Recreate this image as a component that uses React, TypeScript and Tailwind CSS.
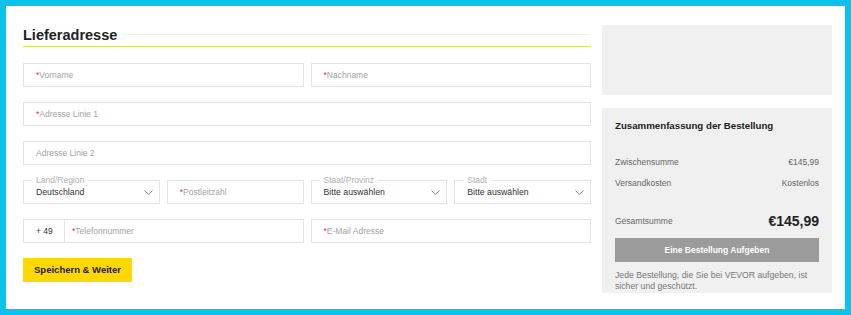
import React from 'react'

const font = { fontFamily: '"Liberation Sans", Arial, sans-serif' }

function Chevron() {
    return (
        <svg width="9" height="5" viewBox="0 0 9 5" fill="none" className="shrink-0">
            <path d="M0.5 0.5 L4.5 4.5 L8.5 0.5" stroke="#777" strokeWidth="0.9" />
        </svg>
    )
}

function TextField({ label, required = true }: { label: string; required?: boolean }) {
    return (
        <div className="h-[24px] min-w-0 border border-[#e4e4e4] bg-white flex items-center px-[12px] text-[8.5px]">
            {required && <span className="text-[#e0303a]">*</span>}
            <span className="text-[#a3a3a3]">{label}</span>
        </div>
    )
}

function SelectField({ label, value }: { label: string; value: string }) {
    return (
        <div className="relative min-w-0 h-[24px] border border-[#e4e4e4] bg-white flex items-center justify-between pl-[12px] pr-[6px]">
            <span className="absolute -top-[6px] left-[8px] px-[4px] bg-white text-[8.5px] leading-[10px] text-[#b0b0b0]">{label}</span>
            <span className="text-[8.7px] text-[#333] mt-[1px]">{value}</span>
            <Chevron />
        </div>
    )
}

export default function App() {
    return (
        <div style={font} className="w-[851px] h-[315px] border-[6px] border-[#0bc2ea] bg-white flex pt-[18px] pl-[17px] pr-[13px] box-border">
            {/* Left: address form */}
            <div className="w-[568px] flex flex-col">
                <div className="h-[22px] flex items-center gap-[6px]">
                    <h2 className="text-[14.5px] font-bold text-[#222] leading-[20px] -mt-[1px]">
                        Lieferadresse
                    </h2>
                    <div className="flex-1 h-px bg-[#f0f0f0] -mt-[1px]"></div>
                </div>
                {/* yellow-green underline */}
                <div className="h-px bg-[#d3e26a]"></div>

                <div className="mt-[16px] flex flex-col gap-[15px]">
                    <div className="grid grid-cols-2 gap-[7px]">
                        <TextField label="Vorname" />
                        <TextField label="Nachname" />
                    </div>
                    <TextField label="Adresse Linie 1" />
                    <TextField label="Adresse Linie 2" required={false} />
                    <div className="grid grid-cols-4 gap-[7px]">
                        <SelectField label="Land/Region" value="Deutschland" />
                        <TextField label="Postleitzahl" />
                        <SelectField label="Staat/Provinz" value="Bitte auswählen" />
                        <SelectField label="Stadt" value="Bitte auswählen" />
                    </div>
                    <div className="grid grid-cols-2 gap-[7px]">
                        <div className="flex min-w-0 h-[24px] border border-[#e4e4e4] text-[8.5px]">
                            <div className="w-[41px] shrink-0 border-r border-[#e4e4e4] flex items-center pl-[12px] text-[#333]">+ 49</div>
                            <div className="flex-1 flex items-center pl-[7px]">
                                <span className="text-[#e0303a]">*</span>
                                <span className="text-[#a3a3a3]">Telefonnummer</span>
                            </div>
                        </div>
                        <TextField label="E-Mail Adresse" />
                    </div>
                    <button className="w-[109px] h-[24px] bg-[#ffd800] text-[9.5px] font-bold text-[#222] flex items-center justify-center">
                        Speichern &amp; Weiter
                    </button>
                </div>
            </div>

            {/* Right: order summary */}
            <div className="ml-[11px] w-[230px] flex flex-col">
                <div className="mt-[1px] h-[70px] bg-[#f0f0f0]"></div>
                <div className="mt-[13px] h-[185px] bg-[#f0f0f0] px-[13px] pt-[12px] text-[8.5px]">
                    <div className="text-[9.7px] font-bold text-[#222] leading-[12px]">Zusammenfassung der Bestellung</div>
                    <div className="mt-[24px] flex justify-between text-[#666] leading-[12px]">
                        <span>Zwischensumme</span>
                        <span>€145,99</span>
                    </div>
                    <div className="mt-[9px] flex justify-between text-[#666] leading-[12px]">
                        <span>Versandkosten</span>
                        <span>Kostenlos</span>
                    </div>
                    <div className="mt-[22px] flex justify-between items-center leading-[20px]">
                        <span className="text-[#666]">Gesamtsumme</span>
                        <span className="text-[14px] font-bold text-[#222]">€145,99</span>
                    </div>
                    <button className="mt-[7px] w-full h-[24px] bg-[#9b9b9b] text-white text-[8.5px] font-bold flex items-center justify-center">
                        Eine Bestellung Aufgeben
                    </button>
                    <p className="mt-[8px] text-[8.7px] leading-[11px] text-[#777]">
                        Jede Bestellung, die Sie bei VEVOR aufgeben, ist sicher und geschützt.
                    </p>
                </div>
            </div>
        </div>
    )
}
